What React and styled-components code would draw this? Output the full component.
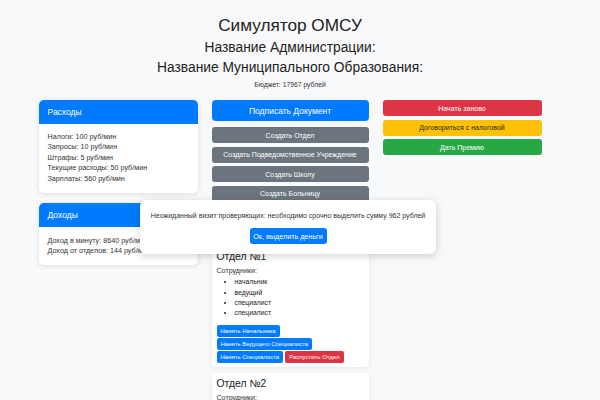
import React from 'react'
import styled, { createGlobalStyle } from 'styled-components'

const GlobalStyle = createGlobalStyle`
  html, body {
    margin: 0;
    padding: 0;
    overflow: hidden;
    background: #f8f9fa;
    font-family: "Liberation Sans", Arial, sans-serif;
    color: #212529;
  }
`

const Page = styled.div`
  position: relative;
  width: 580px;
  display: flex;
  flex-direction: column;
  align-items: center;
`

const Title = styled.h1`
  margin: 14px 0 0;
  font-size: 17.2px;
  line-height: 22px;
  font-weight: 400;
  color: #222;
`

const SubTitle = styled.h2`
  margin: ${p => p.$top || 0}px 0 0;
  font-size: 13.8px;
  line-height: 20px;
  font-weight: 400;
  color: #222;
`

const Budget = styled.p`
  margin: 2px 0 0;
  font-size: 6.8px;
  line-height: 10px;
  color: #333;
`

const Grid = styled.div`
  margin-top: 10px;
  width: 503px;
  display: grid;
  grid-template-columns: 159px 157px 159px;
  column-gap: 14px;
  align-items: start;
`

const Column = styled.div`
  display: flex;
  flex-direction: column;
  gap: ${p => p.$gap || 0}px;
`

const Card = styled.div`
  background: #fff;
  border-radius: 5px;
  box-shadow: 0 1px 5px rgba(0, 0, 0, 0.12);
  overflow: hidden;
`

const CardHeader = styled.div`
  height: 24px;
  padding: 0 9px;
  display: flex;
  align-items: center;
  background: #007bff;
  color: #fff;
  font-size: 8.5px;
`

const CardBody = styled.div`
  padding: ${p => p.$pad || '8px 9px 9px'};
  font-size: 7.2px;
  line-height: 10.4px;
  color: #333;
  white-space: nowrap;
`

const Button = styled.button`
  display: flex;
  align-items: center;
  justify-content: center;
  width: 100%;
  height: ${p => p.$h || 16}px;
  padding: 0;
  border: none;
  border-radius: 3px;
  font-family: inherit;
  font-size: ${p => p.$fs || 7}px;
  background: ${p => p.$bg};
  color: ${p => p.$color || '#fff'};
`

const MainButton = styled(Button)`
  margin-bottom: 2.5px;
  border-radius: 4px;
`

const DeptCard = styled.div`
  margin-top: ${p => p.$top || 6}px;
  padding: 4px 5px 4px;
  background: #fff;
  border-radius: 4px;
  box-shadow: 0 1px 4px rgba(0, 0, 0, 0.08);
`

const DeptTitle = styled.h3`
  margin: 0;
  font-size: 10.4px;
  line-height: 14px;
  font-weight: 400;
  color: #222;
`

const Label = styled.div`
  margin-top: 2px;
  font-size: 7.1px;
  line-height: 10.4px;
  color: #333;
`

const Staff = styled.ul`
  margin: 1px 0 0;
  padding-left: 18px;
  font-size: 6.8px;
  line-height: 10.3px;
  color: #222;
`

const Actions = styled.div`
  margin-top: 6px;
  display: flex;
  flex-wrap: wrap;
  column-gap: 2px;
  row-gap: 0.5px;
`

const SmallButton = styled.button`
  height: 12.5px;
  padding: 0 4px;
  border: none;
  border-radius: 2px;
  font-family: inherit;
  font-size: 6px;
  background: ${p => p.$bg || '#007bff'};
  color: #fff;
`

const Popup = styled.div`
  position: absolute;
  left: 140px;
  top: 200px;
  width: 296px;
  height: 54px;
  box-sizing: border-box;
  padding-top: 11px;
  display: flex;
  flex-direction: column;
  align-items: center;
  background: #fff;
  border-radius: 6px;
  box-shadow: 0 2px 8px rgba(0, 0, 0, 0.18);
`

const PopupText = styled.div`
  font-size: 7px;
  line-height: 10px;
  color: #333;
  white-space: nowrap;
`

const PopupButton = styled.button`
  margin-top: 7px;
  width: 77px;
  height: 16px;
  padding: 0;
  border: none;
  border-radius: 3px;
  font-family: inherit;
  font-size: 7.2px;
  background: #007bff;
  color: #fff;
`

const expenses = [
  'Налоги: 100 руб/мин',
  'Запросы: 10 руб/мин',
  'Штрафы: 5 руб/мин',
  'Текущие расходы: 50 руб/мин',
  'Зарплаты: 560 руб/мин',
]

const income = ['Доход в минуту: 8640 руб/мин', 'Доход от отделов: 144 руб/мин']

const createButtons = [
  'Создать Отдел',
  'Создать Подведомственное Учреждение',
  'Создать Школу',
  'Создать Больницу',
]

const departments = [
  { name: 'Отдел №1', staff: ['начальник', 'ведущий', 'специалист', 'специалист'] },
  { name: 'Отдел №2', staff: ['начальник', 'ведущий', 'специалист'] },
]

function Department({ dept, top }) {
  return (
    <DeptCard $top={top}>
      <DeptTitle>{dept.name}</DeptTitle>
      <Label>Сотрудники:</Label>
      <Staff>
        {dept.staff.map((s, i) => <li key={i}>{s}</li>)}
      </Staff>
      <Actions>
        <SmallButton>Нанять Начальника</SmallButton>
        <SmallButton>Нанять Ведущего Специалиста</SmallButton>
        <SmallButton>Нанять Специалиста</SmallButton>
        <SmallButton $bg="#dc3545">Распустить Отдел</SmallButton>
      </Actions>
    </DeptCard>
  )
}

export default function App() {
  return (
    <>
      <GlobalStyle />
      <Page>
        <Title>Симулятор ОМСУ</Title>
        <SubTitle $top={2}>Название Администрации:</SubTitle>
        <SubTitle>Название Муниципального Образования:</SubTitle>
        <Budget>Бюджет: 17967 рублей</Budget>

        <Grid>
          <Column $gap={10}>
            <Card>
              <CardHeader>Расходы</CardHeader>
              <CardBody>
                {expenses.map((e, i) => <div key={i}>{e}</div>)}
              </CardBody>
            </Card>
            <Card>
              <CardHeader>Доходы</CardHeader>
              <CardBody $pad="9px 9px 8px">
                {income.map((e, i) => <div key={i}>{e}</div>)}
              </CardBody>
            </Card>
          </Column>

          <Column $gap={3.5}>
            <MainButton $bg="#007bff" $h={21} $fs={8.5}>Подписать Документ</MainButton>
            {createButtons.map((b, i) => (
              <Button key={i} $bg="#6c757d">{b}</Button>
            ))}
            <Department dept={departments[0]} top={41} />
            <Department dept={departments[1]} top={2} />
          </Column>

          <Column $gap={3.5}>
            <Button $bg="#dc3545">Начать заново</Button>
            <Button $bg="#ffc107" $color="#212529">Договориться с налоговой</Button>
            <Button $bg="#28a745">Дать Премию</Button>
          </Column>
        </Grid>

        <Popup>
          <PopupText>Неожиданный визит проверяющих: необходимо срочно выделить сумму 962 рублей</PopupText>
          <PopupButton>Ок, выделить деньги</PopupButton>
        </Popup>
      </Page>
    </>
  )
}
